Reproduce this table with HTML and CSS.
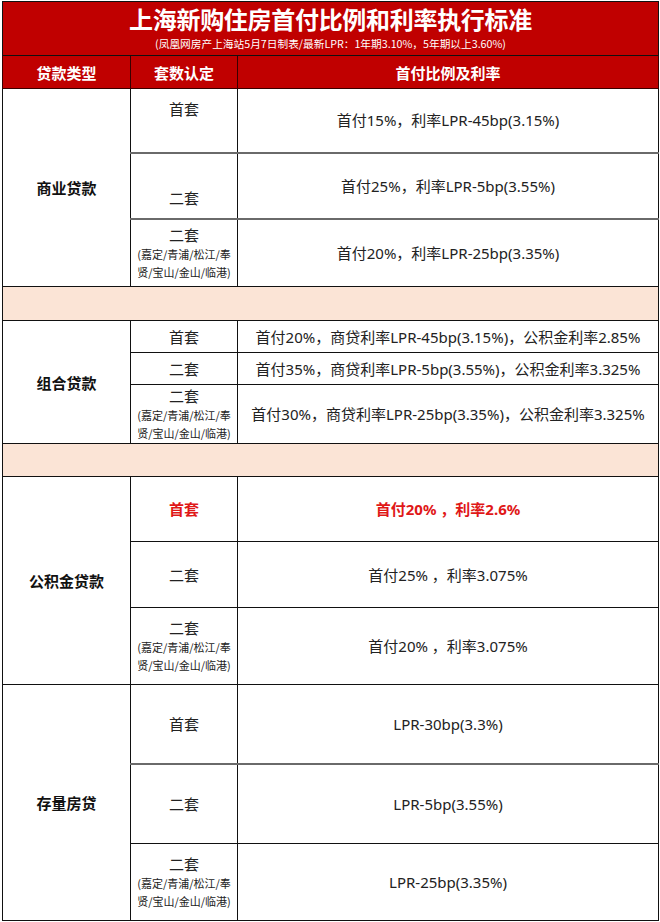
FILE: index.html
```html
<!DOCTYPE html>
<html lang="zh-CN">
<head>
<meta charset="utf-8">
<title>上海新购住房首付比例和利率执行标准</title>
<link rel="stylesheet" href="styles.css">
</head>
<body>
<div class="sheet">
<table class="rates">
  <colgroup>
    <col class="c1"><col class="c2"><col class="c3">
  </colgroup>
  <thead>
    <tr class="title-row">
      <th colspan="3" class="title-cell">
        <div class="title">上海新购住房首付比例和利率执行标准</div>
        <div class="subtitle">(凤凰网房产上海站5月7日制表/最新LPR：1年期3.10%，5年期以上3.60%)</div>
      </th>
    </tr>
    <tr class="head-row">
      <th>贷款类型</th>
      <th>套数认定</th>
      <th>首付比例及利率</th>
    </tr>
  </thead>
  <tbody>
    <tr class="h64">
      <td rowspan="3" class="type">商业贷款</td>
      <td class="kind top">首套</td>
      <td class="rate">首付15%，利率LPR-45bp(3.15%)</td>
    </tr>
    <tr class="h66 gray-top">
      <td class="kind bottom">二套</td>
      <td class="rate">首付25%，利率LPR-5bp(3.55%)</td>
    </tr>
    <tr class="h68 gray-top">
      <td class="kind"><span class="k">二套</span><span class="area">(嘉定/青浦/松江/奉<br>贤/宝山/金山/临港)</span></td>
      <td class="rate">首付20%，利率LPR-25bp(3.35%)</td>
    </tr>
    <tr class="sep h34"><td colspan="3"></td></tr>

    <tr class="h32">
      <td rowspan="3" class="type">组合贷款</td>
      <td class="kind">首套</td>
      <td class="rate">首付20%，商贷利率LPR-45bp(3.15%)，公积金利率2.85%</td>
    </tr>
    <tr class="h32">
      <td class="kind">二套</td>
      <td class="rate">首付35%，商贷利率LPR-5bp(3.55%)，公积金利率3.325%</td>
    </tr>
    <tr class="h59">
      <td class="kind"><span class="k">二套</span><span class="area">(嘉定/青浦/松江/奉<br>贤/宝山/金山/临港)</span></td>
      <td class="rate">首付30%，商贷利率LPR-25bp(3.35%)，公积金利率3.325%</td>
    </tr>
    <tr class="sep h33"><td colspan="3"></td></tr>

    <tr class="h65">
      <td rowspan="3" class="type">公积金贷款</td>
      <td class="kind red">首套</td>
      <td class="rate red">首付20% ，利率2.6%</td>
    </tr>
    <tr class="h66">
      <td class="kind">二套</td>
      <td class="rate">首付25% ，利率3.075%</td>
    </tr>
    <tr class="h77">
      <td class="kind"><span class="k">二套</span><span class="area">(嘉定/青浦/松江/奉<br>贤/宝山/金山/临港)</span></td>
      <td class="rate">首付20% ，利率3.075%</td>
    </tr>

    <tr class="h79">
      <td rowspan="3" class="type">存量房贷</td>
      <td class="kind">首套</td>
      <td class="rate">LPR-30bp(3.3%)</td>
    </tr>
    <tr class="h80 gray-top">
      <td class="kind">二套</td>
      <td class="rate">LPR-5bp(3.55%)</td>
    </tr>
    <tr class="h77">
      <td class="kind"><span class="k">二套</span><span class="area">(嘉定/青浦/松江/奉<br>贤/宝山/金山/临港)</span></td>
      <td class="rate">LPR-25bp(3.35%)</td>
    </tr>
  </tbody>
</table>
</div>
</body>
</html>
```

FILE: styles.css
```css
* { box-sizing: border-box; }
html, body { margin: 0; padding: 0; background: #ffffff; }
body {
  font-family: "Noto Sans", "Noto Sans CJK SC", sans-serif;
  color: #1c1c1c;
}
.sheet {
  padding: 1px 2px 0 2px;
  width: 660px;
}
.rates {
  width: 656px;
  border-collapse: collapse;
  table-layout: fixed;
}
.c1 { width: 128px; }
.c2 { width: 107px; }
.c3 { width: 421px; }

.rates td, .rates th {
  border: 1px solid #111;
  padding: 0;
  text-align: center;
  vertical-align: middle;
}

.title-cell {
  background: #c00000;
  color: #ffffff;
  height: 54px;
  padding: 6px 0 3px 0;
  border-color: #8a0000 #c00000 #3a0000 #c00000;
}
.title {
  font-family: "Noto Sans CJK SC", sans-serif;
  font-weight: 700;
  font-size: 24px;
  line-height: 26px;
  letter-spacing: -0.3px;
}
.subtitle {
  font-family: "Noto Sans CJK SC", sans-serif;
  font-weight: 400;
  font-size: 10.7px;
  line-height: 14px;
  margin-top: 5px;
}
.head-row th {
  background: #c00000;
  color: #ffffff;
  height: 33px;
  font-family: "Noto Sans CJK SC", sans-serif;
  font-weight: 700;
  font-size: 15px;
  border-color: #3a0000;
}

.type {
  font-family: "Noto Sans CJK SC", sans-serif;
  font-weight: 700;
  font-size: 15px;
  color: #111;
}
.kind {
  font-family: "Noto Sans CJK SC", sans-serif;
  font-size: 15px;
  line-height: 20px;
  color: #222;
}
.kind.top { vertical-align: top; padding-top: 10px; }
.kind.bottom { vertical-align: bottom; padding-bottom: 10px; }
.k { display: block; line-height: 20px; }
.area {
  display: block;
  font-size: 11px;
  line-height: 18px;
  color: #222;
}
.rate {
  font-size: 15px;
  line-height: 20px;
  color: #222;
}
.red { color: #e01818; font-weight: 700; }

.sep td { background: #fbe4d6; }

.gray-top td { border-top: 2px solid #6a6a6a; }

.h32 { height: 32px; }
.h33 { height: 33px; }
.h34 { height: 34px; }
.h59 { height: 59px; }
.h64 { height: 64px; }
.h65 { height: 65px; }
.h66 { height: 66px; }
.h68 { height: 68px; }
.h77 { height: 77px; }
.h79 { height: 79px; }
.h80 { height: 80px; }
```
